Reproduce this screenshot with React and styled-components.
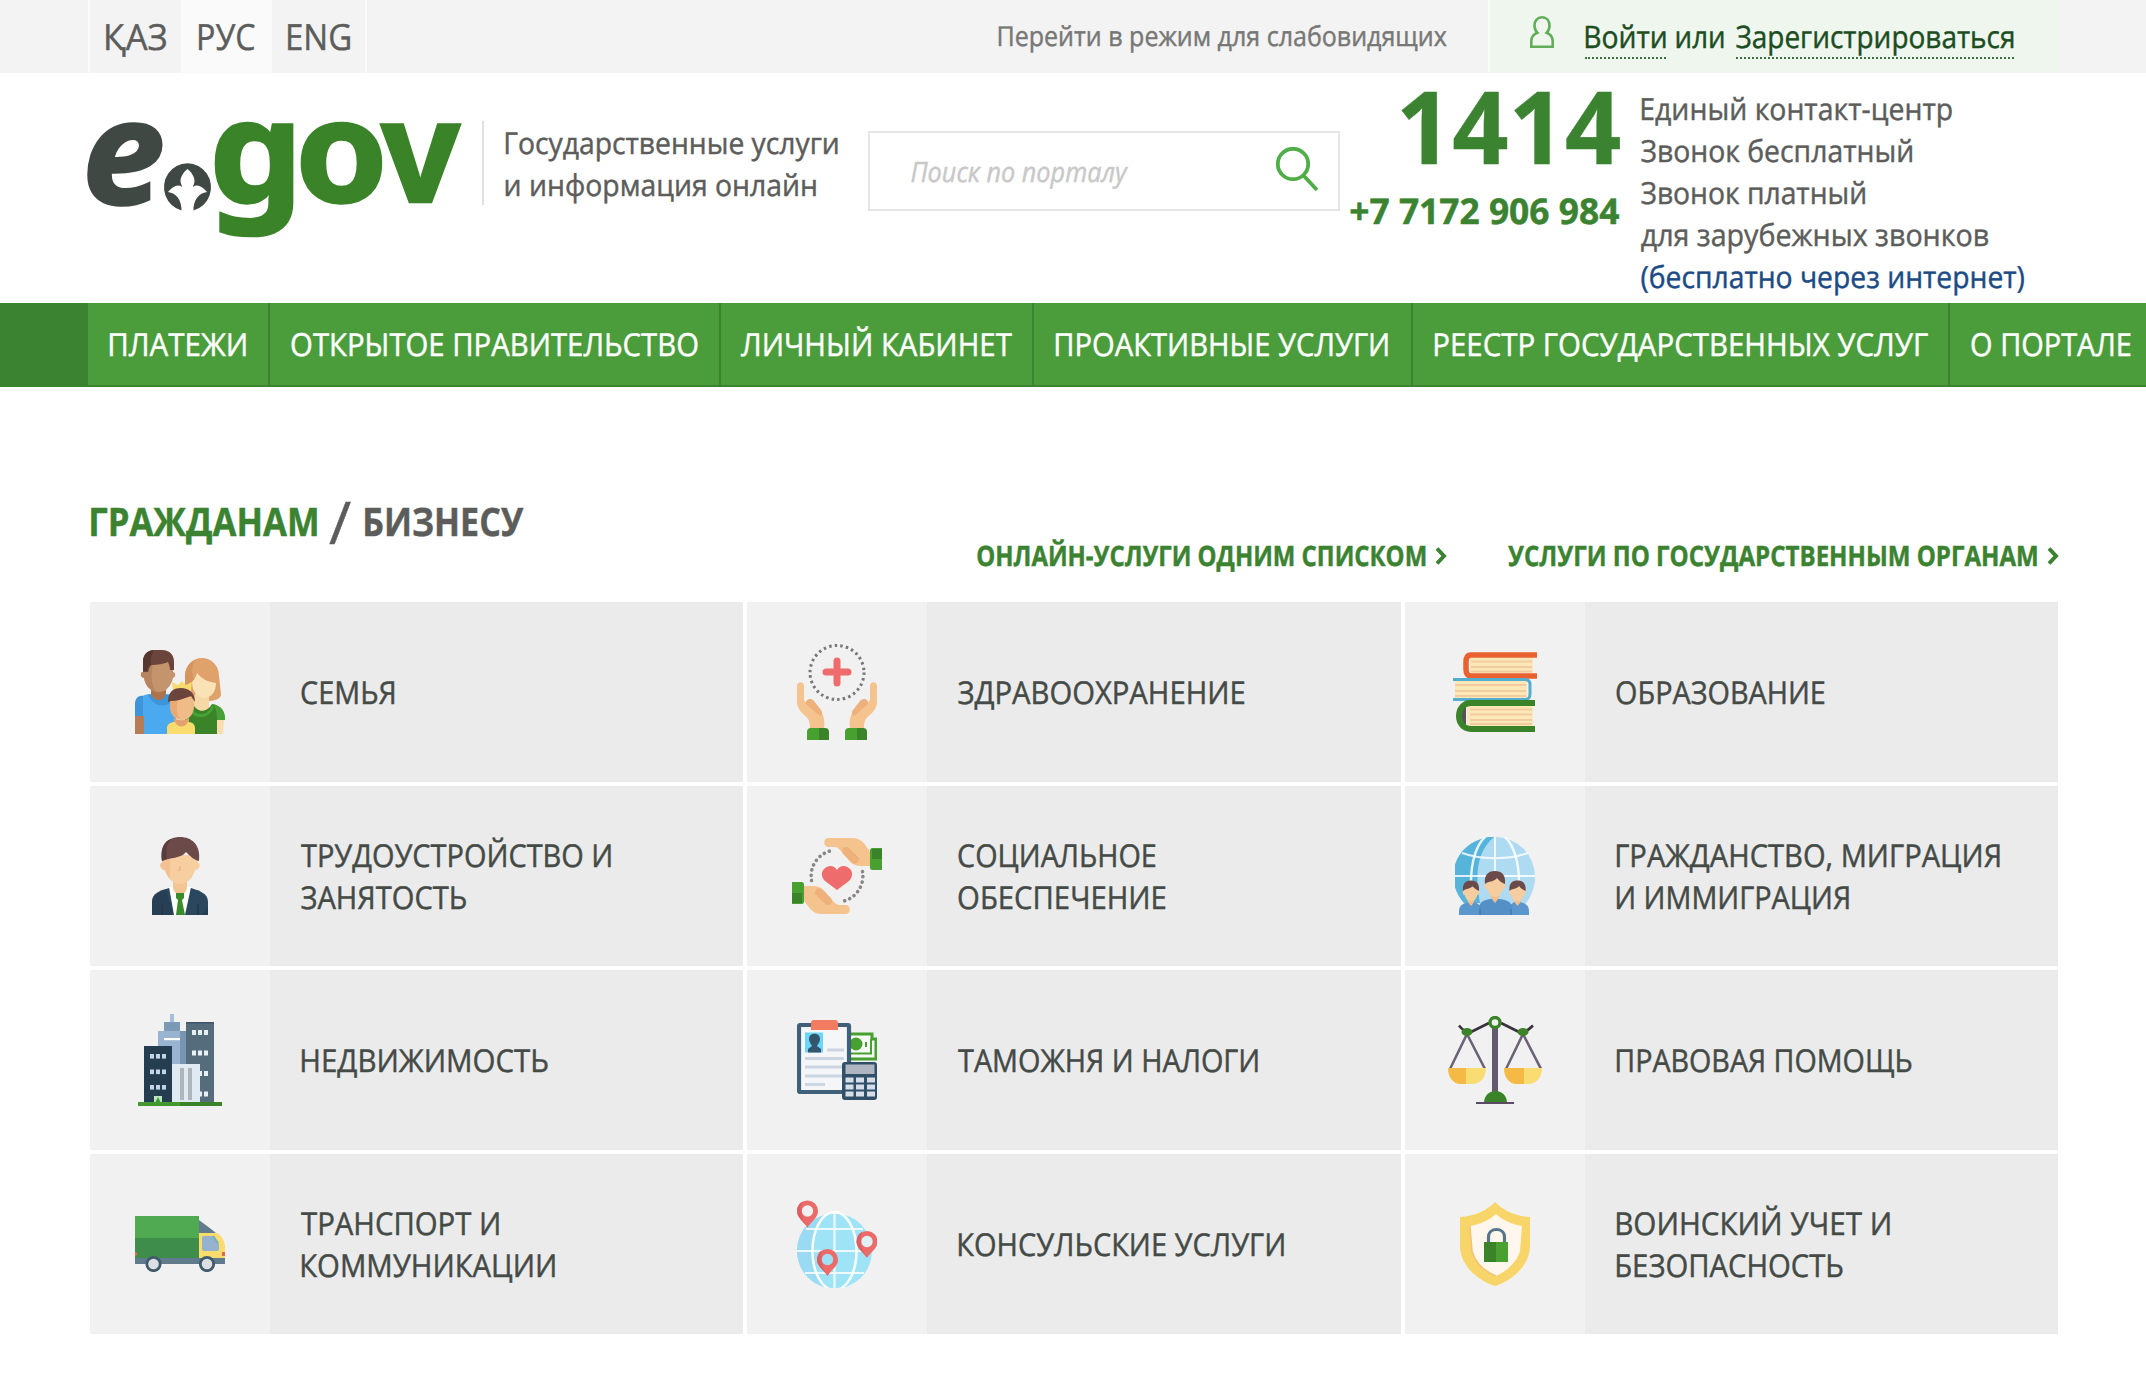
import React, { useLayoutEffect, useState } from "react";
import styled, { createGlobalStyle } from "styled-components";

const FONT = '"Open Sans", "Noto Sans", sans-serif';
const C = {
  green: "#4b9d3b",
  dark: "#3b8331",
  text: "#5c5d5b",
  tile: "#444a46",
};

const GlobalStyle = createGlobalStyle`
  *, *::before, *::after { box-sizing: border-box; }
  body { margin: 0; background: #fff; font-family: ${FONT}; overflow-x: hidden; text-rendering: geometricPrecision; }
  a { color: inherit; text-decoration: none; }
`;

/* ---------- text fitted to a column width ---------- */

const TextBox = styled.span`
  display: block;
  flex: none;
  width: ${(p) => p.$w}px;
  font-size: ${(p) => p.$size}px;
  line-height: ${(p) => p.$lh}px;
  height: ${(p) => p.$lh + (p.$dotted ? 2 : 0)}px;
  font-weight: ${(p) => p.$weight};
  font-style: ${(p) => (p.$italic ? "italic" : "normal")};
  color: ${(p) => p.$color || "inherit"};
  border-bottom: ${(p) => (p.$dotted ? "2px dotted #3f7040" : "0")};
  -webkit-text-stroke: 0.45px currentColor;
`;

const TextRun = styled.span`
  display: inline-block;
  vertical-align: top;
  white-space: nowrap;
  transform-origin: 0 50%;
`;

const MEASURE = 10;

function Fit({ children, w, size, lh, weight = 400, italic, color, dotted, dy = 0 }) {
  const [transform, setTransform] = useState("none");
  useLayoutEffect(() => {
    const ctx = document.createElement("canvas").getContext("2d");
    ctx.font = `${italic ? "italic " : ""}${weight} ${size * MEASURE}px ${FONT}`;
    const m = ctx.measureText(children);
    const left = m.actualBoundingBoxLeft / MEASURE;
    const right = m.actualBoundingBoxRight / MEASURE;
    const k = (w - 1.2) / (left + right);
    setTransform(`translate(${left * k * 0.65}px, ${dy}px) scaleX(${k})`);
  }, [children, w, size, weight, italic, dy]);
  return (
    <TextBox $w={w} $size={size} $lh={lh} $weight={weight} $italic={italic} $color={color} $dotted={dotted}>
      <TextRun style={{ transform }}>{children}</TextRun>
    </TextBox>
  );
}

/* ---------- top bar ---------- */

const TopBar = styled.div`
  display: flex;
  align-items: flex-start;
  height: 73px;
  padding: 0 86px 0 88px;
  background: #f3f3f3;
`;

const Languages = styled.div`
  display: flex;
  height: 74px;
  border: solid #fafafa;
  border-width: 0 2px;
`;

const Language = styled.a`
  display: block;
  width: ${(p) => p.$w}px;
  padding: 17px 0 0 ${(p) => p.$pad}px;
  background: ${(p) => (p.$active ? "#fafafa" : "transparent")};
  color: ${C.text};
`;

const LowVision = styled.a`
  margin: 16px 41px 0 auto;
  color: #777876;
`;

const Account = styled.div`
  display: flex;
  align-items: flex-start;
  width: 572px;
  height: 72px;
  padding: 15px 0 0 40px;
  border-left: 2px solid #fafafa;
  background: #eff6ee;
  color: #1c4d1f;
`;

const UserIcon = styled.svg`
  flex: none;
  margin: 1px 31px 0 0;
`;

const Word = styled.span`
  margin: 0 12px 0 10px;
`;

/* ---------- header ---------- */

const Header = styled.header`
  display: flex;
  align-items: flex-start;
  height: 230px;
  padding-left: 88px;
`;

const Logo = styled.svg`
  flex: none;
  margin-top: 42px;
  overflow: visible;
`;

const LogoLetter = styled.text`
  font-family: "Noto Sans", "Open Sans", sans-serif;
  font-weight: 700;
  font-style: ${(p) => (p.$italic ? "italic" : "normal")};
  fill: ${(p) => p.$color};
  stroke: ${(p) => p.$color};
  stroke-width: 2.5px;
`;

const Tagline = styled.div`
  height: 84px;
  margin: 48px 0 0 20px;
  padding: 1px 0 0 21px;
  border-left: 2px solid #e0e0e0;
  color: ${C.text};
`;

const Search = styled.div`
  display: flex;
  align-items: center;
  justify-content: space-between;
  width: 472px;
  height: 80px;
  margin: 58px 0 0 30px;
  padding: 0 20px 0 41px;
  border: 2px solid #e5e5e5;
`;

const Phones = styled.div`
  display: flex;
  flex-direction: column;
  align-items: flex-end;
  gap: 25px;
  margin: 12px 0 0 10px;
  color: ${C.dark};
`;

const Contacts = styled.div`
  margin: 14px 0 0 21px;
  color: ${C.text};
`;

/* ---------- navigation ---------- */

const Nav = styled.nav`
  display: flex;
  height: 84px;
  padding-left: 88px;
  background: ${C.dark};
  border-bottom: 2px solid ${C.dark};
`;

const NavItem = styled.a`
  flex: none;
  width: ${(p) => (p.$w ? `${p.$w}px` : "196px")};
  padding-left: ${(p) => p.$pad || 21}px;
  background: ${C.green};
  border-right: ${(p) => (p.$w ? `2px solid ${C.dark}` : "0")};
  color: #fff;
`;

/* ---------- services ---------- */

const Main = styled.main`
  padding: 114px 86px 48px 90px;
`;

const Heading = styled.div`
  display: flex;
  align-items: flex-start;
  height: 101px;
`;

const Audience = styled.div`
  display: flex;
  gap: 12px;
`;

const Links = styled.div`
  display: flex;
  gap: 61px;
  margin: 40px 1px 0 auto;
  color: ${C.dark};
`;

const LinkItem = styled.a`
  display: flex;
  align-items: center;
  gap: 9px;
`;

const Grid = styled.div`
  display: grid;
  grid-template-columns: 653px 654px 653px;
  grid-auto-rows: 180px;
  gap: 4px;
  width: 1968px;
`;

const Tile = styled.a`
  display: flex;
  background: #ebebeb;
  color: ${C.tile};
`;

const TileIcon = styled.div`
  display: flex;
  flex: none;
  align-items: center;
  justify-content: center;
  width: 180px;
  background: #f1f1f1;
`;

const TileText = styled.div`
  display: flex;
  flex-direction: column;
  justify-content: center;
  padding-left: 31px;
`;

/* ---------- icons ---------- */

const Svg = ({ w, h, children }) => (
  <svg width={w} height={h} viewBox={`0 0 ${w} ${h}`} fill="none">{children}</svg>
);

const Chevron = () => (
  <svg width="12" height="20" viewBox="0 0 12 20" fill="none">
    <path d="M2 2.5 9 10 2 17.5" stroke={C.dark} strokeWidth="4" />
  </svg>
);

const Family = () => (
  <Svg w={90} h={84}>
    <path d="M50 50V26C50 15 58 8 67 8s17 7 17 18l2 18c0 4-4 6-10 7Z" fill="#dfa26b" />
    <path d="M50 50V28c0-9 4-16 10-18-4 8-4 14 0 22Z" fill="#d4955f" />
    <path d="M60 44h14v14l-6 6-10-6Z" fill="#f6d7a6" />
    <path d="M57 32c2-2 4-5 5-9 5 6 11 9 19 10 0 10-6 15-12 15s-12-6-12-16Z" fill="#fae2b7" />
    <path d="M50 84V62c0-4 4-6 8-8 4 9 14 9 19 0 8 2 13 6 13 16h-8v14Z" fill="#3a8328" />
    <path d="M78 54c8 2 12 6 12 16h-8c0-8-1-11-4-16ZM55 55c5 12 18 12 22 0l2 2c-4 13-22 14-26 0Z" fill="#47a035" />
    <path d="M82 70h7l-1 14h-6Z" fill="#fbdcae" />
    <path d="M0 84V60c0-10 4-14 14-16h19c6 1 8 6 8 12v28Z" fill="#4ba9ef" />
    <path d="M0 66V54c0-6 4-9 8-8v20ZM13 45h20l6 3c-5 10-19 11-26-3Z" fill="#3d94d8" />
    <path d="M0 66h9v18H0Z" fill="#b47c57" />
    <path d="M16 36h15v8c-3 8-12 8-15 0Z" fill="#ac734d" />
    <path d="M8 10h30v12c3 0 3 5 0 6-2 8-7 14-14 14S11 36 9 28c-4-1-4-6-1-6Z" fill="#c4946d" />
    <path d="M18 12c-2 13-2 22 3 30C13 40 10 34 9 28c-4-1-4-6-1-6V12Z" fill="#b88460" />
    <path d="M8 22V12C8 4 13 0 20 0h7c8 0 12 5 12 12v8h-4c0-3-1-6-2-8-4 2-11 3-16 3-2 0-3 4-4 7Z" fill="#6b453b" />
    <path d="M8 21V12C8 5 12 0 19 0c-3 5-4 10-3 15-2 0-3 3-4 6Z" fill="#57362f" />
    <path d="m38 41-1-9 6 3 4-4 4 4 6-3-1 9Z" fill="#f7db6e" />
    <path d="M35 47h24v9c0 8-5 14-12 14s-12-6-12-14Z" fill="#f1bb87" />
    <path d="M35 47h9c-3 8-3 16 1 22-6-1-10-6-10-13Z" fill="#eaaa73" />
    <path d="M33 52c0-10 5-14 13-14s14 5 14 14l-4-6c-8 3-14 5-20 5Z" fill="#6b453b" />
    <path d="M39 68c5 3 10 3 15 0v9H39Z" fill="#e3a16d" />
    <path d="M32 84v-6c0-4 4-6 8-6 3 6 10 6 13 0 5 0 7 3 7 6v6Z" fill="#fadb6d" />
  </Svg>
);

const CareHand = () => (
  <>
    <path d="M0 42c0-5 7-5 7 0v14c2 3 4 4 6 3l10 8c4 4 5 10 4 17H13c0-8-2-10-7-14-4-4-6-8-6-12Z" fill="#f5c38d" />
    <path d="M9 60c-1-4 4-7 8-3l7 9c2 3 1 5-1 6Z" fill="#eeb17c" />
  </>
);

const Health = () => (
  <Svg w={80} h={96}>
    <circle cx="40" cy="28.5" r="27" stroke="#777" strokeWidth="3" strokeDasharray="2.5 3.156" />
    <path d="M40 17v22M29 28h22" stroke="#ee6d6c" strokeWidth="7" strokeLinecap="round" />
    <CareHand />
    <g transform="translate(80 0) scale(-1 1)"><CareHand /></g>
    <path d="M10 96V88q0-4 4-4h13v12ZM48 96V88q0-4 4-4h13v12Z" fill="#47a030" />
    <path d="M22 84h6q4 0 4 4v8H22ZM60 84h6q4 0 4 4v8H60Z" fill="#3a8328" />
  </Svg>
);

const Books = () => (
  <Svg w={84} h={80}>
    <path d="M17 6h63v15H17Z" fill="#fbe8b8" />
    <path d="M18 9.5h61M18 15h61M18 19.5h61" stroke="#f2cba0" strokeWidth="2" />
    <path d="M84 3H18c-4 0-5 3-5 7v7c0 4 1 7 5 7h66" stroke="#ea612f" strokeWidth="5.5" />
    <path d="M2 29h72v17H2Z" fill="#fbe8b8" />
    <path d="M2 33h71M2 39h71M2 44h71" stroke="#f2cba0" strokeWidth="2" />
    <path d="M0 27.5h72c4 0 5 2 5 5v9c0 4-1 6-5 6H0" stroke="#54adcf" strokeWidth="3" />
    <path d="M14 54h66v20H14Z" fill="#fbe8b8" />
    <path d="M17 57.5h62M17 62.5h62M17 68h62M17 72h62" stroke="#f2cba0" strokeWidth="2.2" />
    <path d="M13 54v20c-7-5-7-15 0-20Z" fill="#5b4f5f" />
    <path d="M82 51H18C2 51 2 77 18 77h64" stroke="#3a8328" strokeWidth="6" />
  </Svg>
);

const Worker = () => (
  <Svg w={56} h={78}>
    <path d="M0 78V65c0-8 7-11 17-14h22c10 3 17 6 17 14v13Z" fill="#2b475d" />
    <path d="M0 78V65c0-8 6-11 14-13l7 26ZM56 78V70l-6 8Z" fill="#22394c" opacity=".55" />
    <path d="M17 50h22l-6 28H22Z" fill="#fff" />
    <path d="M10 67v11M46 67v11" stroke="#22394c" strokeWidth="2" />
    <path d="M21 44h14v7c-1 5-4 6-7 6s-6-1-7-6Z" fill="#f3c594" />
    <path d="M12 18h32l2 8c3 0 2 7-3 7-2 8-8 14-15 14s-13-6-15-14c-5 0-6-7-3-7Z" fill="#f7cea0" />
    <path d="M12 20h6v21c-3-3-4-5-5-8-5 0-6-7-3-7Z" fill="#f3bf93" />
    <path d="M28 29v4h-2" stroke="#efb58e" strokeWidth="1.5" />
    <path d="M10 24C8 8 16 0 28 0s21 8 19 24c-5-1-9-5-13-9-5 7-16 5-24 9Z" fill="#6d4a4a" />
    <path d="M10 24C8 12 12 4 19 2c-5 6-5 11-4 20Z" fill="#5b3c3e" />
    <path d="M24 56h8v5l-2 2 3 15h-9l2-15-2-2Z" fill="#3a8c2b" />
  </Svg>
);

const HalfHand = () => (
  <>
    <path d="M36 0h24c10 0 12 6 17 12 1 2 3 2 4 2v14H69c-8 0-11-4-15-9-5-6-8-10-11-10h-7c-5 0-5-9 0-9Z" fill="#f5c38d" />
    <path d="M50 12c1-4 6-4 9 0l8 8c0 4-3 7-6 5L51 16Z" fill="#eeb17c" />
    <rect x="78" y="10" width="14" height="22" rx="2.5" fill="#47a030" />
    <path d="M80 11h10v10H80Z" fill="#3a8328" />
    <path d="M19.5 42.5A26 26 0 0 1 40 12.5" stroke="#8b8585" strokeWidth="3.6" strokeLinecap="round" strokeDasharray="0.1 5.2" />
  </>
);

const Social = () => (
  <Svg w={90} h={76}>
    <HalfHand />
    <g transform="rotate(180 45 38)"><HalfHand /></g>
    <path d="M45 52 33 43c-4-4-4-9-1-12 4-4 10-4 13 1 3-5 9-5 13-1 3 3 3 8-1 12Z" fill="#ee6d6c" />
  </Svg>
);

const Head = ({ x, y, s }) => (
  <g transform={`translate(${x} ${y}) scale(${s})`}>
    <path d="M-4 22h8v5L0 32l-4-5Z" fill="#f0bf8e" />
    <path d="M-9 8H9l1 6c1 1 0 4-2 4-2 6-5 8-8 8s-6-2-8-8c-2 0-3-3-2-4Z" fill="#f6cd9f" />
    <path d="M-10 13C-11 4-7 0 0 0s11 4 10 13C7 12 4 10 2 7-1 11-6 10-10 13Z" fill="#6d4a4a" />
  </g>
);

const Citizenship = () => (
  <Svg w={80} h={78}>
    <path d="M0 39.5a40 39.5 0 0 1 80 0c0 11-4 20-9 27H9C4 60 0 51 0 39.5Z" fill="#aedbf2" />
    <path d="M33 0C-3 7-11 44 9 66h16C20 40 21 15 39 0Z" fill="#56b4da" />
    <path d="M0 39h80M40 0v50M7 16c20 7 46 7 66 0" stroke="#fff" strokeOpacity=".8" strokeWidth="2" />
    <path d="M16 45C16 26 21 8 30 0M64 45C64 26 59 8 50 0" stroke="#fff" strokeOpacity=".85" strokeWidth="2.4" />
    <path d="M4 78v-4c0-6 5-8 10-9h6l6 4v9ZM54 78v-9l5-4h6c5 1 9 3 9 9v4Z" fill="#5a97cc" />
    <path d="M24 78v-7c0-6 5-8 11-9h10c7 1 12 3 12 9v7Z" fill="#548fc6" />
    <path d="M25 72v6M56 72v6" stroke="#427fb8" strokeWidth="1.5" />
    <Head x={16} y={43.5} s={0.8} />
    <Head x={62.5} y={43.5} s={0.8} />
    <Head x={40} y={34} s={1} />
  </Svg>
);

const Windows = ({ xs, ys, w, h, fill }) =>
  ys.map((y) => xs.map((x) => <rect key={`${x}-${y}`} x={x} y={y} width={w} height={h} fill={fill} />));

const Buildings = () => (
  <Svg w={84} h={92}>
    <path d="M32 0h4v9h-4Z" fill="#a3bfd9" />
    <path d="M26 8h16v10H26Z" fill="#7c99b6" />
    <path d="M20 17h28v71H20Z" fill="#98b4d1" />
    <path d="M42 17h6v40h-6Z" fill="#7895b2" />
    <path d="M26 24h16v2.2H26Z" fill="#fff" />
    <path d="M48 8h28v80H48Z" fill="#546c7c" />
    <path d="M48 8h28v1.5H48Z" fill="#3f5567" />
    <Windows xs={[54, 60, 66]} ys={[16, 36.5, 57, 77.5]} w={4} h={5} fill="#e8f0f5" />
    <path d="M6 32h28v56H6Z" fill="#253d51" />
    <Windows xs={[12, 18, 24]} ys={[40, 55.5, 71]} w={4} h={4.6} fill="#c4d4e2" />
    <path d="M34 50h28v38H34Z" fill="#e0eaf2" />
    <path d="M42 54h4v32h-4ZM50 54h4v32h-4Z" fill="#aeb5bb" />
    <path d="M16 82h8v7h-8Z" fill="#bfe5c4" />
    <path d="m20 83 3 6h-6Z" fill="#3b9a2d" />
    <path d="M0 88h42v4H0Z" fill="#43992f" />
    <path d="M42 88h42v4H42Z" fill="#3a8328" />
  </Svg>
);

const Taxes = () => (
  <Svg w={80} h={80}>
    <path d="M50 14h26v23H50Z" fill="#f5faf5" />
    <path d="M53 14h22v5h4v20H53" stroke="#47a030" strokeWidth="3" />
    <path d="M53 33.5h21V19" stroke="#47a030" strokeWidth="2" />
    <circle cx="59" cy="24" r="6.5" fill="#47a030" />
    <path d="M69 22v5" stroke="#47a030" strokeWidth="2" />
    <rect x="2" y="5" width="50" height="67" rx="1" fill="#f5f6f7" stroke="#3f6079" strokeWidth="4.2" />
    <path d="M14 10V3q0-3 3-3h21q3 0 3 3v7Z" fill="#f17c62" />
    <path d="M8 12.5h18v20H8Z" fill="#6ad5fd" />
    <path d="M12 19c0-7 11-7 11 0 0 3-2 5-3 7l4 3v3.5H11V29l4-3c-1-2-3-4-3-7Z" fill="#34566d" />
    <path d="M30 30h17M8 38.5h39M8 47h37M8 56h37M8 64.5h20" stroke="#cbd6e2" strokeWidth="3" />
    <rect x="45" y="42" width="35" height="38" rx="3" fill="#304f69" />
    <path d="M48.5 44.5h29V54h-29Z" fill="#afb6c1" />
    <Windows xs={[48.5, 59, 70]} ys={[57.5, 64.5, 71.5]} w={8} h={5} fill="#d6dfe8" />
  </Svg>
);

const Legal = () => (
  <Svg w={94} h={88}>
    <path d="M41 7 24 15.5q-6 3-13-6M53 7l17 8.5q6 3 15-6" stroke="#37323b" strokeWidth="2.6" />
    <path d="M19 18 2 53M19 18l18 35M75 18 58 53M75 18l18 35" stroke="#6c6377" strokeWidth="2.6" />
    <path d="M44 10h6v68h-6Z" fill="#645a6f" />
    <circle cx="47" cy="6.5" r="5" fill="#f1f1f1" stroke="#3a8328" strokeWidth="3.4" />
    <ellipse cx="19" cy="16" rx="5.5" ry="4" fill="#3a8328" />
    <ellipse cx="75" cy="16" rx="5.5" ry="4" fill="#3a8328" />
    <path d="M0 52h38c0 10-6 16-14 16H13C6 68 0 62 0 52ZM56 52h38c0 10-6 16-14 16H69c-7 0-13-6-13-16Z" fill="#f9dd72" />
    <path d="M0 52h18v16h-5C6 68 0 62 0 52ZM56 52h20v16h-7c-7 0-13-6-13-16Z" fill="#f5ba45" />
    <path d="M36 87c0-16 23-16 23 0Z" fill="#3a8328" />
    <path d="M28 87h38" stroke="#5b4a66" strokeWidth="2" />
  </Svg>
);

const Truck = () => (
  <Svg w={90} h={56}>
    <path d="M0 0h64v22H0Z" fill="#4faa52" />
    <path d="M0 22h64v20H0Z" fill="#3f8d4a" />
    <path d="M64 4c6 5 13 9 18 14H64Z" fill="#627c8d" />
    <path d="M64 17h18c5 3 8 9 8 14v11H64Z" fill="#fadb6d" />
    <path d="M69 20h9l6 8v5q0 2-2 2H69q-2 0-2-2V22q0-2 2-2Z" fill="#95b3cf" />
    <path d="m78 20 5 7" stroke="#6eb1bf" strokeWidth="2" />
    <path d="M0 42h90v6H0Z" fill="#607b8d" />
    <path d="M0 36q5 2 0 4ZM90 36h-3v4h3Z" fill="#ea6548" />
    <circle cx="18.5" cy="48" r="6.7" fill="#dddfe3" stroke="#405c6c" strokeWidth="2.8" />
    <circle cx="72" cy="48" r="6.7" fill="#dddfe3" stroke="#405c6c" strokeWidth="2.8" />
  </Svg>
);

const Pin = ({ x, y, hole }) => (
  <g transform={`translate(${x} ${y})`}>
    <path d="M0 16.5C-4 10-10.5 7-10.5 0a10.5 10.5 0 0 1 21 0C10.5 7 4 10 0 16.5Z" fill="#ec6b69" />
    <path d="M0 16.5C-4 10-10.5 7-10.5 0-10.5-4-8-8-5-9.5-8-2-6 8 0 16.5Z" fill="#dd5f61" />
    <circle r="5.7" fill={hole} />
  </g>
);

const Consular = () => (
  <Svg w={80} h={88}>
    <circle cx="37.5" cy="51" r="37.5" fill="#9fe3f6" />
    <path d="M18 19C-6 33-6 68 18 83l9 3C14 60 14 42 27 15Z" fill="#9adaf3" />
    <path d="M0 51h75M37.5 13v75M9 29h57M8 73h59" stroke="#fff" strokeOpacity=".8" strokeWidth="2.2" />
    <ellipse cx="37.5" cy="51" rx="22" ry="39" stroke="#fff" strokeOpacity=".9" strokeWidth="2.6" />
    <Pin x={10.5} y={11} hole="#f1f1f1" />
    <Pin x={70} y={41.5} hole="#dff1f6" />
    <Pin x={30.5} y={59.5} hole="#9fe0f4" />
  </Svg>
);

const Military = () => (
  <Svg w={70} h={84}>
    <path d="M35 0c9 9 20 14 35 15v29c0 18-16 34-35 40C16 78 0 62 0 44V15C15 14 26 9 35 0Z" fill="#f8d568" />
    <path d="M36 12c7 6 15 10 26 12l-2 25c-3 11-13 20-24 25-12-5-21-14-24-25l-2-25c11-2 19-6 26-12Z" fill="#fff7ed" />
    <path d="M10 24 12 49c3 11 12 20 24 25" stroke="#f3c37a" strokeWidth="1.5" />
    <path d="M28.5 41v-6c0-10 16-10 16 0v6" stroke="#58768a" strokeWidth="3.2" />
    <path d="M24 40h12v20H24Z" fill="#3a8328" />
    <path d="M36 40h12v20H36Z" fill="#47a030" />
  </Svg>
);

/* ---------- data ---------- */

const NAV = [
  { label: "ПЛАТЕЖИ", w: 182, text: 137 },
  { label: "ОТКРЫТОЕ ПРАВИТЕЛЬСТВО", w: 451, text: 407 },
  { label: "ЛИЧНЫЙ КАБИНЕТ", w: 313, pad: 20, text: 272 },
  { label: "ПРОАКТИВНЫЕ УСЛУГИ", w: 379, text: 333 },
  { label: "РЕЕСТР ГОСУДАРСТВЕННЫХ УСЛУГ", w: 537, text: 494 },
  { label: "О ПОРТАЛЕ", text: 160 },
];

const CONTACTS = [
  { text: "Единый контакт-центр", w: 311 },
  { text: "Звонок бесплатный", w: 272 },
  { text: "Звонок платный", w: 225 },
  { text: "для зарубежных звонков", w: 348 },
  { text: "(бесплатно через интернет)", w: 384, color: "#1b4a85" },
];

const TILES = [
  { icon: Family, lines: [["СЕМЬЯ", 94]] },
  { icon: Health, lines: [["ЗДРАВООХРАНЕНИЕ", 287]] },
  { icon: Books, lines: [["ОБРАЗОВАНИЕ", 209]] },
  { icon: Worker, lines: [["ТРУДОУСТРОЙСТВО И", 311], ["ЗАНЯТОСТЬ", 166]] },
  { icon: Social, lines: [["СОЦИАЛЬНОЕ", 198], ["ОБЕСПЕЧЕНИЕ", 208]] },
  { icon: Citizenship, lines: [["ГРАЖДАНСТВО, МИГРАЦИЯ", 384], ["И ИММИГРАЦИЯ", 233]] },
  { icon: Buildings, lines: [["НЕДВИЖИМОСТЬ", 247]] },
  { icon: Taxes, lines: [["ТАМОЖНЯ И НАЛОГИ", 301]] },
  { icon: Legal, lines: [["ПРАВОВАЯ ПОМОЩЬ", 296]] },
  { icon: Truck, lines: [["ТРАНСПОРТ И", 199], ["КОММУНИКАЦИИ", 254]] },
  { icon: Consular, lines: [["КОНСУЛЬСКИЕ УСЛУГИ", 326]] },
  { icon: Military, lines: [["ВОИНСКИЙ УЧЕТ И", 274], ["БЕЗОПАСНОСТЬ", 227]] },
];

export default function App() {
  return (
    <>
      <GlobalStyle />
      <TopBar>
        <Languages>
          <Language $w={91} $pad={15}><Fit w={61} size={36} lh={40}>ҚАЗ</Fit></Language>
          <Language $w={91} $pad={17} $active><Fit w={57} size={36} lh={40}>РУС</Fit></Language>
          <Language $w={93} $pad={15}><Fit w={63} size={36} lh={40}>ENG</Fit></Language>
        </Languages>
        <LowVision><Fit w={449} size={27.5} lh={40} dy={1}>Перейти в режим для слабовидящих</Fit></LowVision>
        <Account>
          <UserIcon width="24" height="32" viewBox="0 0 24 32" fill="none" stroke="#62ad5a" strokeWidth="2.6">
            <path d="M12 1.3c4.600 0 7.500 3.400 7.500 8.200 0 3-1 5.600-2.800 7.300 3.600 1.500 6 4.400 6 8.200v5.700H1.300V25c0-3.800 2.400-6.700 6-8.200-1.800-1.700-2.800-4.300-2.800-7.300 0-4.800 2.900-8.200 7.500-8.200Z" />
          </UserIcon>
          <Fit w={81} size={31} lh={42} dy={1} dotted>Войти</Fit>
          <Word><Fit w={48} size={31} lh={42} dy={1}>или</Fit></Word>
          <Fit w={278} size={31} lh={42} dy={1} dotted>Зарегистрироваться</Fit>
        </Account>
      </TopBar>

      <Header>
        <Logo width="374" height="130" viewBox="0 0 374 130">
          <LogoLetter x="-6" y="88.5" fontSize="145" textLength="83" lengthAdjust="spacingAndGlyphs" $italic $color="#404844">e</LogoLetter>
          <path d="M93.5 95.5a23.500 24 0 1 1 12 0Z" fill="#404844" />
          <path d="M99.5 54c4 3 7 8 7 12 0 2.500-1.500 4.500-1.500 6 4-3 9-1 14 5-8 1-14 8-13.500 19.500h-12C94 85 88 78 80 77c5-6 10-8 14-5 0-1.500-1.500-3.500-1.500-6 0-4 3-9 7-12Z" fill="#fff" />
          <LogoLetter x="121" y="87" fontSize="142" textLength="94" lengthAdjust="spacingAndGlyphs" $color="#3a8328">g</LogoLetter>
          <LogoLetter x="207" y="87" fontSize="142" textLength="93" lengthAdjust="spacingAndGlyphs" $color="#3a8328">o</LogoLetter>
          <LogoLetter x="293" y="87" fontSize="142" textLength="79" lengthAdjust="spacingAndGlyphs" $color="#3a8328">v</LogoLetter>
        </Logo>
        <Tagline>
          <Fit w={333} size={30} lh={42}>Государственные услуги</Fit>
          <Fit w={311} size={30} lh={42}>и информация онлайн</Fit>
        </Tagline>
        <Search>
          <Fit w={218} size={28} lh={40} dy={1} italic color="#c8c8c8">Поиск по порталу</Fit>
          <svg width="42" height="48" viewBox="0 0 42 48" fill="none" stroke="#4fae47" strokeWidth="3.8">
            <circle cx="17" cy="17" r="15.2" />
            <path d="m27.5 28.5 13.5 14.5" />
          </svg>
        </Search>
        <Phones>
          <Fit w={221} size={101} lh={80} weight={700}>1414</Fit>
          <Fit w={270} size={35.6} lh={40} dy={1} weight={700}>+7 7172 906 984</Fit>
        </Phones>
        <Contacts>
          {CONTACTS.map((c) => (
            <Fit key={c.text} w={c.w} size={30.5} lh={42} color={c.color}>{c.text}</Fit>
          ))}
        </Contacts>
      </Header>

      <Nav>
        {NAV.map((n) => (
          <NavItem key={n.label} $w={n.w} $pad={n.pad}>
            <Fit w={n.text} size={31.6} lh={82} dy={1}>{n.label}</Fit>
          </NavItem>
        ))}
      </Nav>

      <Main>
        <Heading>
          <Audience>
            <Fit w={227} size={39.2} lh={40} dy={1} weight={700} color={C.dark}>ГРАЖДАНАМ</Fit>
            <Fit w={23} size={59} lh={40} dy={0.5} color={C.text}>/</Fit>
            <Fit w={160} size={39.2} lh={40} dy={1} weight={700} color={C.text}>БИЗНЕСУ</Fit>
          </Audience>
          <Links>
            <LinkItem>
              <Fit w={449} size={28} lh={30} weight={700}>ОНЛАЙН-УСЛУГИ ОДНИМ СПИСКОМ</Fit>
              <Chevron />
            </LinkItem>
            <LinkItem>
              <Fit w={530} size={28} lh={30} weight={700}>УСЛУГИ ПО ГОСУДАРСТВЕННЫМ ОРГАНАМ</Fit>
              <Chevron />
            </LinkItem>
          </Links>
        </Heading>
        <Grid>
          {TILES.map(({ icon: Icon, lines }) => (
            <Tile key={lines[0][0]}>
              <TileIcon><Icon /></TileIcon>
              <TileText>
                {lines.map(([text, w]) => (
                  <Fit key={text} w={w} size={31.4} lh={42} dy={1}>{text}</Fit>
                ))}
              </TileText>
            </Tile>
          ))}
        </Grid>
      </Main>
    </>
  );
}
